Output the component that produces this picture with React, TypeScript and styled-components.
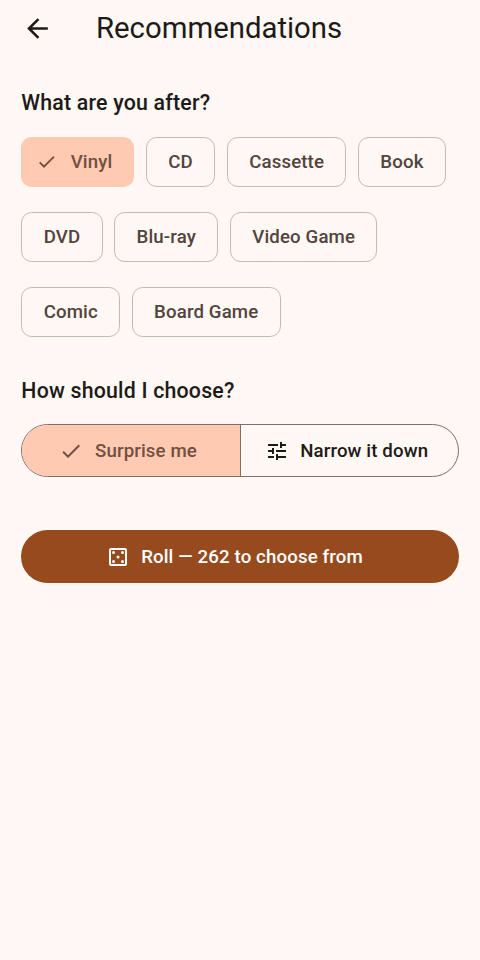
import React from 'react';
import styled, { createGlobalStyle } from 'styled-components';
import { MdArrowBack, MdCheck, MdOutlineCasino, MdTune } from 'react-icons/md';

const GlobalStyle = createGlobalStyle`
  html, body {
    margin: 0;
    padding: 0;
    background: #fff8f5;
  }
  * {
    box-sizing: border-box;
  }
`;

const Page = styled.div`
  width: 480px;
  height: 960px;
  background: #fff8f5;
  color: #201a17;
  font-family: Roboto, 'Noto Sans', sans-serif;
  overflow: hidden;
`;

const TopBar = styled.header`
  height: 56px;
  display: flex;
  align-items: center;
  padding-left: 22px;
  color: #201a17;
`;

const BackIcon = styled(MdArrowBack)`
  width: 31px;
  height: 31px;
  margin-right: 43px;
  flex: none;
`;

const Title = styled.h1`
  margin: 0;
  font-size: 29.33px;
  font-weight: 400;
  line-height: 36px;
`;

const Content = styled.main`
  padding: 33px 21.33px 0;
`;

const SectionLabel = styled.h2`
  margin: 0;
  font-size: 21.33px;
  font-weight: 500;
  letter-spacing: 0.2px;
  line-height: 28px;
  color: #201a17;
`;

const ChipGrid = styled.div`
  display: flex;
  flex-wrap: wrap;
  column-gap: 11.6px;
  row-gap: 25px;
  margin-top: 20px;
`;

const Chip = styled.button<{ $selected?: boolean }>`
  height: 50px;
  display: inline-flex;
  align-items: center;
  padding: ${(p) => (p.$selected ? '0 22px 0 14.5px' : '0 21.33px')};
  border-radius: 10.67px;
  border: ${(p) => (p.$selected ? 'none' : '1px solid #c6b8ae')};
  background: ${(p) => (p.$selected ? '#ffc9b2' : 'transparent')};
  color: ${(p) => (p.$selected ? '#72503f' : '#52443c')};
  font-family: inherit;
  font-size: 18.67px;
  font-weight: 500;
  letter-spacing: 0.13px;
  svg {
    width: 21.33px;
    height: 21.33px;
    margin-right: 13.5px;
  }
`;

const ModeLabel = styled(SectionLabel)`
  margin-top: 40px;
`;

const Segments = styled.div`
  display: flex;
  height: 53px;
  margin-top: 19px;
  border: 1px solid #7d6e66;
  border-radius: 27px;
  overflow: hidden;
`;

const Segment = styled.button<{ $selected?: boolean }>`
  flex: 1;
  display: flex;
  align-items: center;
  justify-content: center;
  gap: 11.5px;
  border: none;
  padding: 0 5.33px 0 0;
  background: ${(p) => (p.$selected ? '#ffc9b2' : 'transparent')};
  color: ${(p) => (p.$selected ? '#72503f' : '#201a17')};
  font-family: inherit;
  font-size: 18.67px;
  font-weight: 500;
  letter-spacing: 0.13px;
  & + & {
    border-left: 1px solid #7d6e66;
  }
  svg {
    width: 24px;
    height: 24px;
  }
`;

const RollButton = styled.button`
  width: 100%;
  height: 53px;
  margin-top: 53px;
  display: flex;
  align-items: center;
  justify-content: center;
  gap: 10.67px;
  border: none;
  border-radius: 27px;
  padding: 0 10.67px 0 0;
  background: #964a1e;
  color: #fff;
  font-family: inherit;
  font-size: 18.67px;
  font-weight: 500;
  letter-spacing: 0.13px;
  svg {
    width: 24px;
    height: 24px;
  }
`;

const formats = [
  { label: 'Vinyl', selected: true },
  { label: 'CD' },
  { label: 'Cassette' },
  { label: 'Book' },
  { label: 'DVD' },
  { label: 'Blu-ray' },
  { label: 'Video Game' },
  { label: 'Comic' },
  { label: 'Board Game' },
];

const App = () => {
  return (
    <Page>
      <GlobalStyle />
      <TopBar>
        <BackIcon />
        <Title>Recommendations</Title>
      </TopBar>
      <Content>
        <SectionLabel>What are you after?</SectionLabel>
        <ChipGrid>
          {formats.map((it) => (
            <Chip key={it.label} $selected={it.selected}>
              {it.selected && <MdCheck />}
              {it.label}
            </Chip>
          ))}
        </ChipGrid>
        <ModeLabel>How should I choose?</ModeLabel>
        <Segments>
          <Segment $selected>
            <MdCheck />
            Surprise me
          </Segment>
          <Segment>
            <MdTune />
            Narrow it down
          </Segment>
        </Segments>
        <RollButton>
          <MdOutlineCasino />
          Roll — 262 to choose from
        </RollButton>
      </Content>
    </Page>
  );
};

export default App;
